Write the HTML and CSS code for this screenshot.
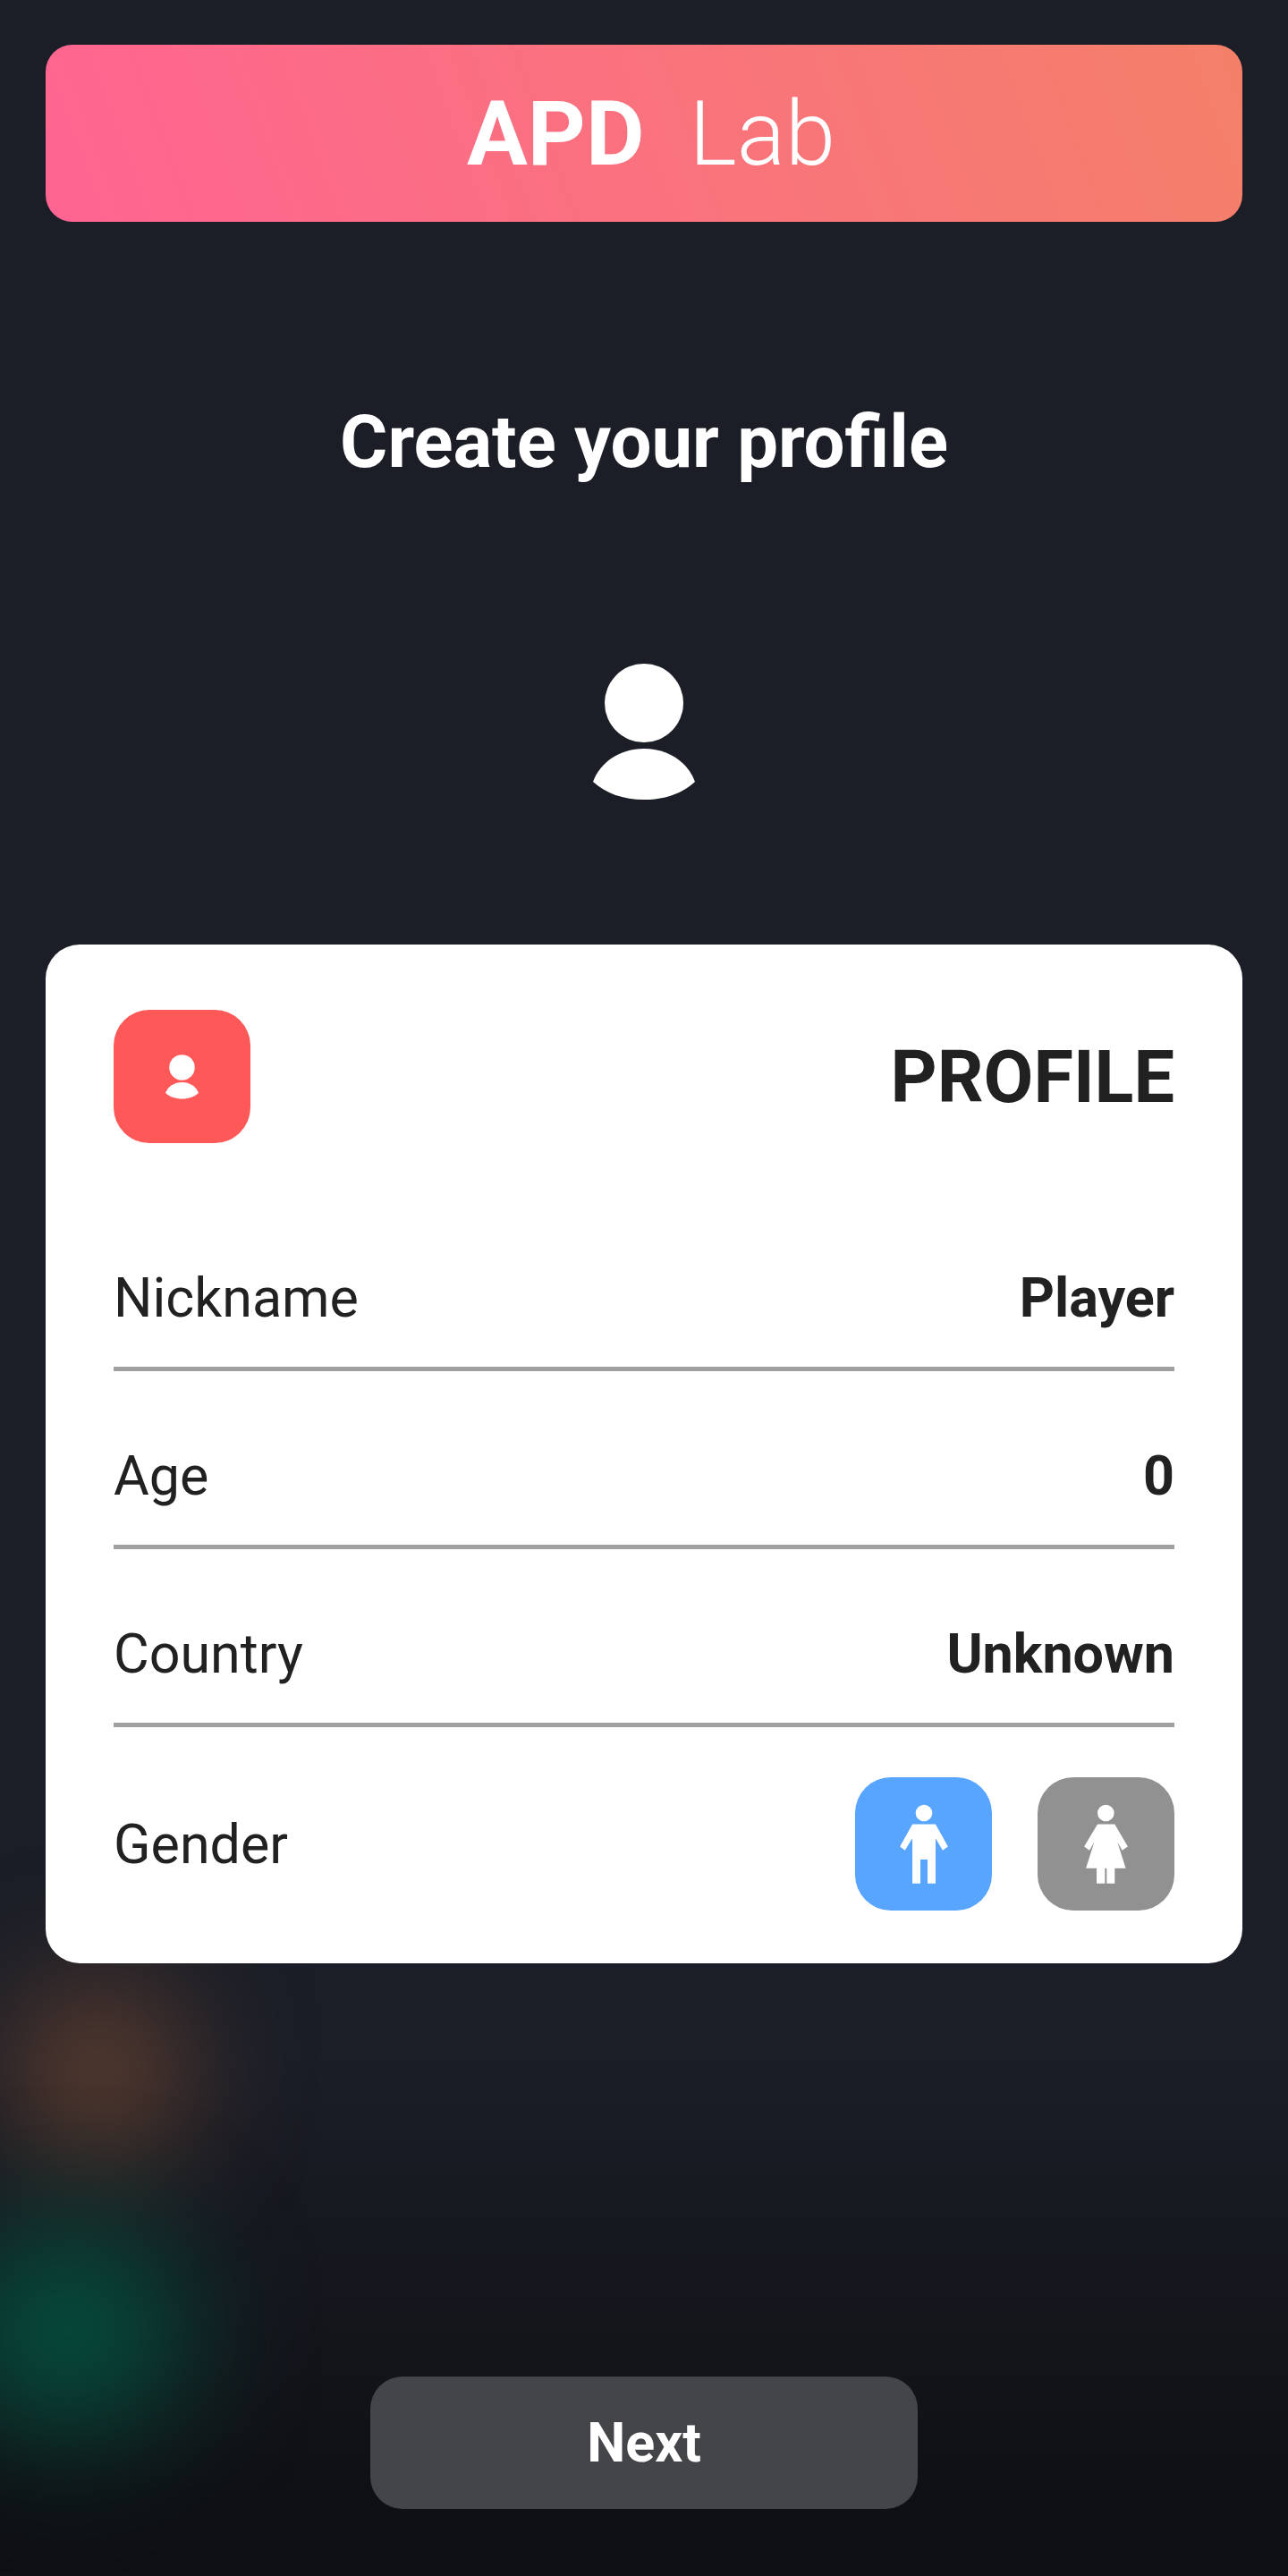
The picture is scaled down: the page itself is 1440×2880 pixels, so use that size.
FILE: index.html
```html
<!DOCTYPE html>
<html lang="en">
<head>
    <meta charset="UTF-8">
    <meta name="viewport" content="width=device-width, initial-scale=1.0">
    <title>APD Lab</title>
    <link rel="stylesheet" href="styles.css">
</head>
<body>
    <div class="glow glow-orange"></div>
    <div class="glow glow-green"></div>

    <div class="screen">
        <header class="brand">
            <span class="brand-bold">APD</span>
            <span class="brand-light">Lab</span>
        </header>

        <h1 class="title">Create your profile</h1>

        <svg class="avatar" viewBox="0 0 114 153">
            <circle cx="57" cy="44" r="44"/>
            <path d="M0 132 C8 110 30 95 57 95 C84 95 106 110 114 132 C100 145 80 152 57 152 C34 152 14 145 0 132 Z"/>
        </svg>

        <section class="card">
            <div class="card-head">
                <div class="icon-box icon-red">
                    <svg class="icon-user" viewBox="0 0 114 153">
                        <circle cx="57" cy="44" r="44"/>
                        <path d="M0 132 C8 110 30 95 57 95 C84 95 106 110 114 132 C100 145 80 152 57 152 C34 152 14 145 0 132 Z"/>
                    </svg>
                </div>
                <h2 class="card-title">PROFILE</h2>
            </div>

            <div class="row row-line">
                <span class="row-label">Nickname</span>
                <span class="row-value">Player</span>
            </div>
            <div class="row row-line">
                <span class="row-label">Age</span>
                <span class="row-value">0</span>
            </div>
            <div class="row row-line">
                <span class="row-label">Country</span>
                <span class="row-value">Unknown</span>
            </div>
            <div class="row row-gender">
                <span class="row-label">Gender</span>
                <div class="gender-btns">
                    <div class="icon-box icon-blue">
                        <svg class="icon-male" viewBox="258 170 162 268">
                            <circle cx="339" cy="200" r="28"/>
                            <path d="M300 238 H378 L420 313 L402 326 L378 285 V437 H351 V357 H327 V437 H300 V285 L275 326 L258 313 Z"/>
                        </svg>
                    </div>
                    <div class="icon-box icon-gray">
                        <svg class="icon-female" viewBox="875 170 147 268">
                            <circle cx="948" cy="200" r="28"/>
                            <path d="M920 238 H978 L1022 313 L1003 326 L987 298 L1015 386 H978 V437 H951 V386 H945 V437 H917 V386 H881 L909 298 L893 326 L875 313 Z"/>
                        </svg>
                    </div>
                </div>
            </div>
        </section>

        <button class="next-btn">Next</button>
    </div>
</body>
</html>
```
FILE: styles.css
```css
html, body {
    margin: 0;
    padding: 0;
}
body {
    position: relative;
    width: 1440px;
    height: 2880px;
    overflow: hidden;
    font-family: Roboto, "Liberation Sans", sans-serif;
    background: linear-gradient(180deg, #1b1e27 0%, #1b1e27 80%, #0f1014 97%, #0f1014 100%);
}
.glow {
    position: absolute;
    border-radius: 50%;
    filter: blur(70px);
}
.glow-orange {
    left: 20px;
    top: 2220px;
    width: 180px;
    height: 190px;
    background: #694331;
}
.glow-green {
    left: -55px;
    top: 2490px;
    width: 260px;
    height: 230px;
    background: #04503e;
}
.screen {
    position: relative;
    display: flex;
    flex-direction: column;
    align-items: center;
    padding: 50px 51px 0;
}
.brand {
    box-sizing: border-box;
    width: 100%;
    height: 198px;
    padding-left: 16px;
    border-radius: 30px;
    background: linear-gradient(70deg, #ff6492 0%, #f48069 100%);
    color: #fff;
    font-size: 101px;
    display: flex;
    align-items: center;
    justify-content: center;
    gap: 50px;
}
.brand-bold {
    font-weight: 700;
}
.brand-light {
    font-weight: 300;
}
.title {
    margin: 196px 0 0;
    color: #fff;
    font-size: 81.5px;
    line-height: 100px;
    font-weight: 700;
}
.avatar {
    width: 114px;
    height: 153px;
    margin-top: 198px;
    fill: #fff;
}
.card {
    box-sizing: border-box;
    width: 100%;
    height: 1139px;
    margin-top: 161px;
    padding: 73px 76px 0;
    border-radius: 38px;
    background: #fff;
    color: #212121;
}
.card-head {
    display: flex;
    align-items: center;
    justify-content: space-between;
    height: 149px;
    margin-bottom: 56px;
}
.card-title {
    margin: 0;
    padding-top: 2px;
    font-size: 81px;
    font-weight: 700;
}
.icon-box {
    width: 153px;
    height: 149px;
    border-radius: 40px;
    display: flex;
    align-items: center;
    justify-content: center;
}
.icon-red {
    background: #ff5858;
}
.icon-blue {
    background: #57a5ff;
}
.icon-gray {
    background: #919191;
}
.icon-user {
    width: 37px;
    height: 50px;
    fill: #fff;
}
.icon-male {
    width: 54px;
    height: 89px;
    fill: #fff;
}
.icon-female {
    width: 49px;
    height: 89px;
    fill: #fff;
}
.row {
    display: flex;
    align-items: center;
    justify-content: space-between;
}
.row-line {
    box-sizing: border-box;
    height: 199px;
    align-items: flex-end;
    padding-bottom: 41px;
    border-bottom: 5px solid #a0a0a0;
}
.row-label {
    font-size: 61px;
}
.row-value {
    font-size: 61px;
    font-weight: 700;
}
.row-gender {
    margin-top: 56px;
}
.gender-btns {
    display: flex;
    gap: 51px;
}
.next-btn {
    width: 612px;
    height: 148px;
    margin-top: 462px;
    border: none;
    border-radius: 36px;
    background: #444549;
    color: #fff;
    font-family: inherit;
    font-size: 61px;
    font-weight: 700;
}
```
